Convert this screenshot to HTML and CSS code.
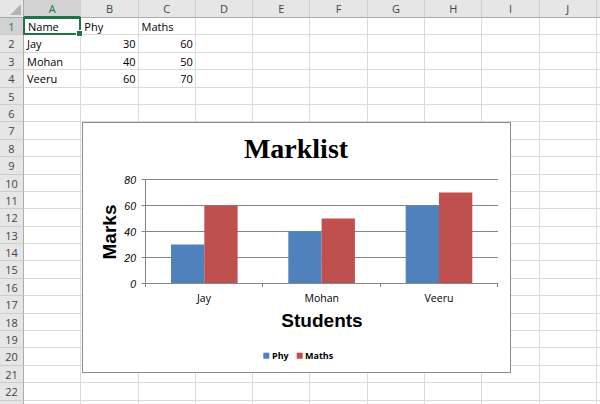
FILE: index.html
```html
<!DOCTYPE html>
<html lang="en">
<head>
  <meta charset="utf-8">
  <title>Marklist</title>
  <link rel="stylesheet" href="styles.css">
</head>
<body>
  <!-- SHEET -->
  <div id="sheet">
    <div id="grid"></div>

    <!-- chart floats over the cells -->
    <div id="chart">
      <svg width="429" height="251" viewBox="0 0 429 251">
        <text class="title" x="214" y="36" text-anchor="middle">Marklist</text>

        <g class="gridlines">
          <line x1="63.5" y1="57.5" x2="416" y2="57.5"/>
          <line x1="63.5" y1="83.5" x2="416" y2="83.5"/>
          <line x1="63.5" y1="109.5" x2="416" y2="109.5"/>
          <line x1="63.5" y1="135.5" x2="416" y2="135.5"/>
        </g>

        <g class="bars">
          <rect class="phy" x="89" y="122.5" width="33.3" height="39"/>
          <rect class="maths" x="122.3" y="83.5" width="33.3" height="78"/>
          <rect class="phy" x="206.3" y="109.5" width="33.3" height="52"/>
          <rect class="maths" x="239.6" y="96.5" width="33.3" height="65"/>
          <rect class="phy" x="323.7" y="83.5" width="33.3" height="78"/>
          <rect class="maths" x="357" y="70.5" width="33.3" height="91"/>
        </g>

        <g class="axis">
          <line x1="63.5" y1="57.5" x2="63.5" y2="162"/>
          <line x1="63.5" y1="161.5" x2="416" y2="161.5"/>
          <line x1="59.5" y1="57.5" x2="63.5" y2="57.5"/>
          <line x1="59.5" y1="83.5" x2="63.5" y2="83.5"/>
          <line x1="59.5" y1="109.5" x2="63.5" y2="109.5"/>
          <line x1="59.5" y1="135.5" x2="63.5" y2="135.5"/>
          <line x1="59.5" y1="161.5" x2="63.5" y2="161.5"/>
          <line x1="63.5" y1="161.5" x2="63.5" y2="165"/>
          <line x1="180.5" y1="161.5" x2="180.5" y2="165"/>
          <line x1="298.5" y1="161.5" x2="298.5" y2="165"/>
          <line x1="415.5" y1="161.5" x2="415.5" y2="165"/>
        </g>

        <g class="ylabels">
          <text x="54" y="61.5">80</text>
          <text x="54" y="87.5">60</text>
          <text x="54" y="113.5">40</text>
          <text x="54" y="139.5">20</text>
          <text x="54" y="165.5">0</text>
        </g>

        <g class="xlabels">
          <text x="122" y="179.5">Jay</text>
          <text x="239.7" y="179.5">Mohan</text>
          <text x="357" y="179.5">Veeru</text>
        </g>

        <text class="axis-title" x="240" y="205" text-anchor="middle">Students</text>
        <text class="axis-title" transform="translate(34 110) rotate(-90)" text-anchor="middle">Marks</text>

        <g class="legend">
          <rect class="phy" x="181.3" y="230.7" width="6" height="6"/>
          <text x="190" y="236.5">Phy</text>
          <rect class="maths" x="214.7" y="230.7" width="6" height="6"/>
          <text x="223" y="236.5">Maths</text>
        </g>
      </svg>
    </div>
  </div>

<script>
(function(){
  const grid=document.getElementById('grid');
  const cols='ABCDEFGHIJ'.split('');
  const data={
    1:['Name','Phy','Maths'],
    2:['Jay',30,60],
    3:['Mohan',40,50],
    4:['Veeru',60,70]
  };

  const add=(cls,txt)=>{
    const d=document.createElement('div');
    d.className=cls;
    if(txt!==undefined) d.textContent=txt;
    grid.appendChild(d);
    return d;
  };

  // header row (last column only peeks in at the edge, so no letter)
  add('corner');
  cols.forEach((c,i)=>add('colhead'+(i===0?' sel':''),c));
  add('colhead');

  // rows 1-22, plus the sliver of row 23 at the bottom
  for(let r=1;r<=23;r++){
    add('rowhead'+(r===1?' sel':''),r<23?r:undefined);
    cols.forEach((c,i)=>{
      const v=data[r]?data[r][i]:undefined;
      let cls='cell';
      if(typeof v==='number') cls+=' num';
      if(r===1&&i===0) cls+=' active';
      add(cls,v);
    });
    add('cell');
  }
})();
</script>
</body>
</html>
```

FILE: styles.css
```css
/* --- Layout & Basics --- */
*{box-sizing:border-box}
body{margin:0;width:600px;height:404px;overflow:hidden;background:#fff;font-family:"Open Sans",sans-serif}
#sheet{position:relative;width:600px;height:404px;overflow:hidden}

/* --- Grid --- */
#grid{display:grid;grid-template-columns:24px repeat(10,57.3px) 60px;grid-template-rows:18px repeat(23,17.4px)}
.cell{border-right:1px solid #dadada;border-bottom:1px solid #dadada;font-size:11px;line-height:17px;padding:0 2px 0 3px;white-space:nowrap;overflow:visible;color:#000}
.cell.num{text-align:right}
.cell.active{position:relative;border:2px solid #217346;margin:-1px 0 0 -1px;padding-left:3px;line-height:15px}
.cell.active::after{content:"";position:absolute;right:-4px;bottom:-4px;width:5px;height:5px;background:#217346;border:1px solid #fff}

/* --- Headers --- */
.corner{background:#e6e6e6;border-right:1px solid #ababab;border-bottom:1px solid #ababab;position:relative}
.corner::after{content:"";position:absolute;right:2px;bottom:2px;border-style:solid;border-width:0 0 11px 11px;border-color:transparent transparent #b4b4b4 transparent}
.colhead{background:#e6e6e6;border-right:1px solid #cdcdcd;border-bottom:1px solid #ababab;text-align:center;font-size:11px;line-height:17px;color:#444}
.rowhead{background:#e6e6e6;border-right:1px solid #ababab;border-bottom:1px solid #cdcdcd;text-align:center;font-size:11px;line-height:17px;color:#444}
.colhead.sel{background:#d2d2d2;color:#217346;border-bottom:2px solid #217346}
.rowhead.sel{background:#d2d2d2;color:#217346}

/* --- Chart --- */
#chart{position:absolute;left:82px;top:122px;width:429px;height:251px;border:1px solid #8c8c8c;background:#fff}
#chart svg{display:block;margin:-1px}
.title{font-family:"Liberation Serif",serif;font-weight:bold;font-size:28px;fill:#000}
.gridlines line,.axis line{stroke:#868686;stroke-width:1}
.phy{fill:#4f81bd}
.maths{fill:#c0504d}
.ylabels text{font-family:"Liberation Sans",sans-serif;font-style:italic;font-size:10.5px;text-anchor:end;fill:#000}
.xlabels text{font-family:"Open Sans",sans-serif;font-size:10.5px;text-anchor:middle;fill:#000}
.axis-title{font-family:"Liberation Sans",sans-serif;font-weight:bold;font-size:19px;fill:#000}
.legend text{font-family:"Open Sans",sans-serif;font-weight:bold;font-size:9px;fill:#000}
```
